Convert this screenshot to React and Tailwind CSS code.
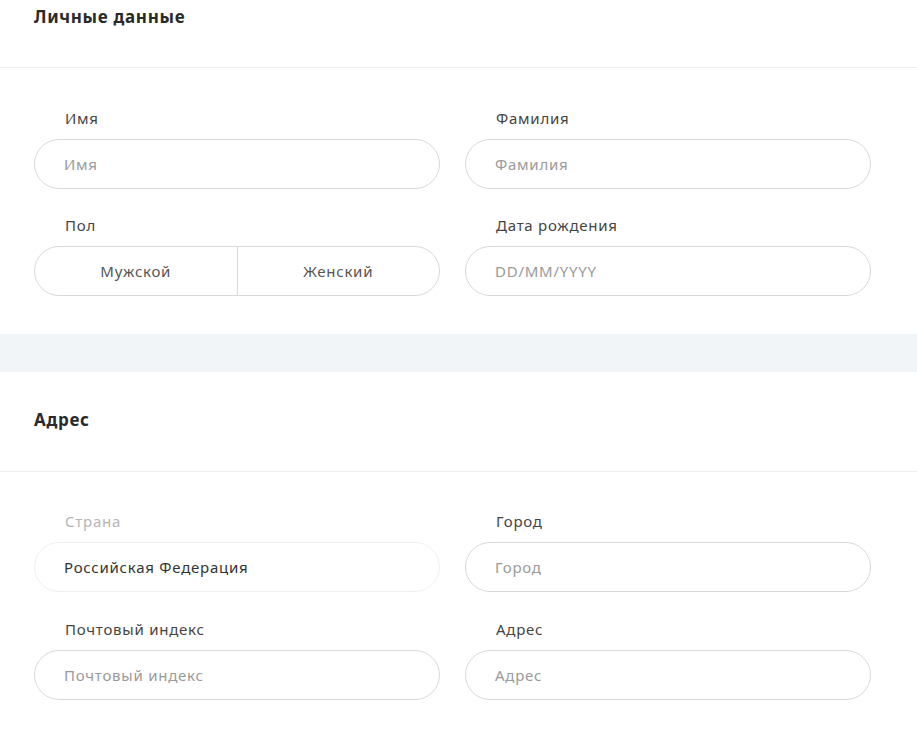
import React from 'react';

const font = { fontFamily: '"Noto Sans", "Open Sans", sans-serif' };

const Field = ({ label, placeholder, value, disabled }) => (
  <div className="flex flex-col">
    <label className={`h-5 pl-[31px] text-[15px] leading-5 tracking-[0.05em] ${disabled ? 'text-[#b5b5b5]' : 'text-[#444]'}`}>{label}</label>
    <div
      className={`mt-[11px] h-[50px] flex items-center rounded-full border px-[29px] text-[15px] tracking-[0.05em] ${
        disabled ? 'border-[#f0f0f0]' : 'border-[#d9d9d9]'
      }`}
    >
      {value ? (
        <span className="text-[#333]">{value}</span>
      ) : (
        <span className="text-[#9a9a9a]">{placeholder}</span>
      )}
    </div>
  </div>
);

const GenderToggle = () => (
  <div className="flex flex-col">
    <label className="h-5 pl-[31px] text-[15px] leading-5 tracking-[0.05em] text-[#444]">Пол</label>
    <div className="mt-[11px] h-[50px] flex rounded-full border border-[#d9d9d9] text-[15px] tracking-[0.05em] text-[#555] overflow-hidden">
      <button className="flex-1 flex items-center justify-center border-r border-[#d9d9d9]">Мужской</button>
      <button className="flex-1 flex items-center justify-center">Женский</button>
    </div>
  </div>
);

export default function App() {
  return (
    <div className="min-h-screen bg-white" style={font}>
      {/* Personal data */}
      <section>
        <div className="h-[68px] border-b border-[#eeeeee] px-[34px] pt-[6px]">
          <h2 className="text-[17px] leading-[22px] font-bold tracking-[0.04em] text-[#2a2a2a]">Личные данные</h2>
        </div>
        <div className="px-[34px] pt-[40px] pb-[38px]">
          <div className="w-[837px] grid grid-cols-2 gap-x-[25px] gap-y-[26px]">
            <Field label="Имя" placeholder="Имя" />
            <Field label="Фамилия" placeholder="Фамилия" />
            <GenderToggle />
            <Field label="Дата рождения" placeholder="DD/MM/YYYY" />
          </div>
        </div>
      </section>

      <div className="h-[38px] bg-[#f2f5f8]" />

      {/* Address */}
      <section>
        <div className="h-[100px] border-b border-[#eeeeee] px-[34px] pt-[37px]">
          <h2 className="text-[17px] leading-[22px] font-bold tracking-[0.04em] text-[#2a2a2a]">Адрес</h2>
        </div>
        <div className="px-[34px] pt-[39px] pb-[30px]">
          <div className="w-[837px] grid grid-cols-2 gap-x-[25px] gap-y-[27px]">
            <Field label="Страна" value="Российская Федерация" disabled />
            <Field label="Город" placeholder="Город" />
            <Field label="Почтовый индекс" placeholder="Почтовый индекс" />
            <Field label="Адрес" placeholder="Адрес" />
          </div>
        </div>
      </section>
    </div>
  );
}
